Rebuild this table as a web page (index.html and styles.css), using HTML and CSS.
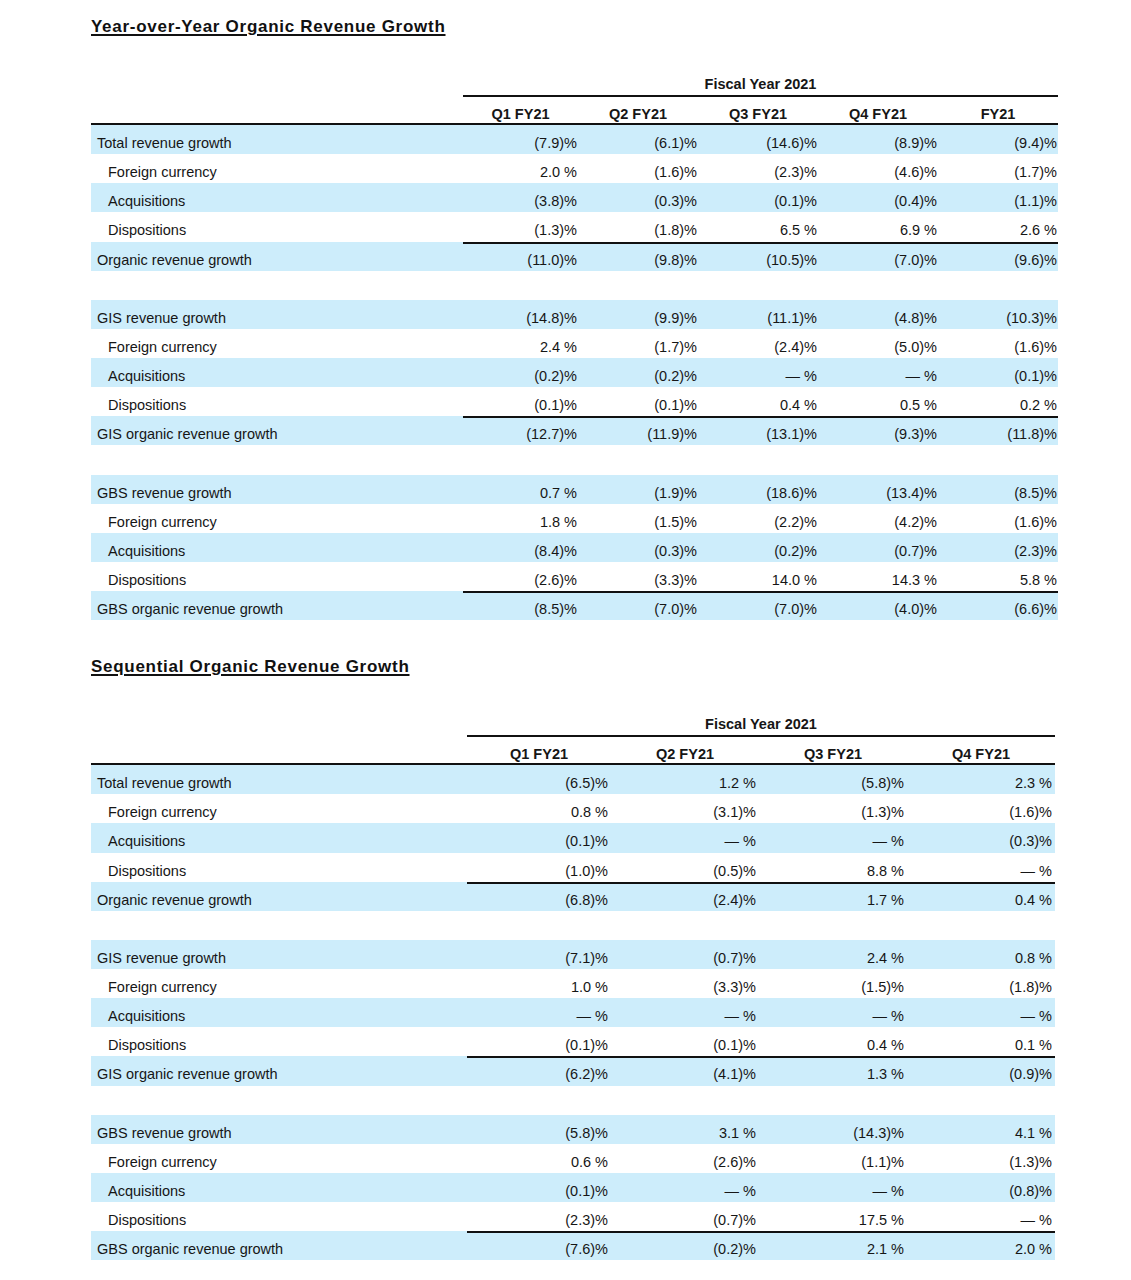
FILE: index.html
```html
<!DOCTYPE html>
<html lang="en">
<head>
<meta charset="utf-8">
<title>Organic Revenue Growth</title>
<link rel="stylesheet" href="styles.css">
</head>
<body>
<main class="page">
  <section class="report">
    <h2 class="title">Year-over-Year Organic Revenue Growth</h2>
    <div class="table t5">
      <div class="row head-top"><div class="cell"></div><div class="cell fiscal">Fiscal Year 2021</div></div>
      <div class="row head"><div class="cell"></div><div class="cell col">Q1 FY21</div><div class="cell col">Q2 FY21</div><div class="cell col">Q3 FY21</div><div class="cell col">Q4 FY21</div><div class="cell col">FY21</div></div>

      <div class="row shade"><div class="cell label">Total revenue growth</div><div class="cell num">(7.9)%</div><div class="cell num">(6.1)%</div><div class="cell num">(14.6)%</div><div class="cell num">(8.9)%</div><div class="cell num">(9.4)%</div></div>
      <div class="row"><div class="cell label sub">Foreign currency</div><div class="cell num">2.0&nbsp;%</div><div class="cell num">(1.6)%</div><div class="cell num">(2.3)%</div><div class="cell num">(4.6)%</div><div class="cell num">(1.7)%</div></div>
      <div class="row shade"><div class="cell label sub">Acquisitions</div><div class="cell num">(3.8)%</div><div class="cell num">(0.3)%</div><div class="cell num">(0.1)%</div><div class="cell num">(0.4)%</div><div class="cell num">(1.1)%</div></div>
      <div class="row"><div class="cell label sub">Dispositions</div><div class="cell num">(1.3)%</div><div class="cell num">(1.8)%</div><div class="cell num">6.5&nbsp;%</div><div class="cell num">6.9&nbsp;%</div><div class="cell num">2.6&nbsp;%</div></div>
      <div class="row shade ruled"><div class="cell label">Organic revenue growth</div><div class="cell num">(11.0)%</div><div class="cell num">(9.8)%</div><div class="cell num">(10.5)%</div><div class="cell num">(7.0)%</div><div class="cell num">(9.6)%</div></div>
      <div class="row blank"></div>

      <div class="row shade"><div class="cell label">GIS revenue growth</div><div class="cell num">(14.8)%</div><div class="cell num">(9.9)%</div><div class="cell num">(11.1)%</div><div class="cell num">(4.8)%</div><div class="cell num">(10.3)%</div></div>
      <div class="row"><div class="cell label sub">Foreign currency</div><div class="cell num">2.4&nbsp;%</div><div class="cell num">(1.7)%</div><div class="cell num">(2.4)%</div><div class="cell num">(5.0)%</div><div class="cell num">(1.6)%</div></div>
      <div class="row shade"><div class="cell label sub">Acquisitions</div><div class="cell num">(0.2)%</div><div class="cell num">(0.2)%</div><div class="cell num">—&nbsp;%</div><div class="cell num">—&nbsp;%</div><div class="cell num">(0.1)%</div></div>
      <div class="row"><div class="cell label sub">Dispositions</div><div class="cell num">(0.1)%</div><div class="cell num">(0.1)%</div><div class="cell num">0.4&nbsp;%</div><div class="cell num">0.5&nbsp;%</div><div class="cell num">0.2&nbsp;%</div></div>
      <div class="row shade ruled"><div class="cell label">GIS organic revenue growth</div><div class="cell num">(12.7)%</div><div class="cell num">(11.9)%</div><div class="cell num">(13.1)%</div><div class="cell num">(9.3)%</div><div class="cell num">(11.8)%</div></div>
      <div class="row blank"></div>

      <div class="row shade"><div class="cell label">GBS revenue growth</div><div class="cell num">0.7&nbsp;%</div><div class="cell num">(1.9)%</div><div class="cell num">(18.6)%</div><div class="cell num">(13.4)%</div><div class="cell num">(8.5)%</div></div>
      <div class="row"><div class="cell label sub">Foreign currency</div><div class="cell num">1.8&nbsp;%</div><div class="cell num">(1.5)%</div><div class="cell num">(2.2)%</div><div class="cell num">(4.2)%</div><div class="cell num">(1.6)%</div></div>
      <div class="row shade"><div class="cell label sub">Acquisitions</div><div class="cell num">(8.4)%</div><div class="cell num">(0.3)%</div><div class="cell num">(0.2)%</div><div class="cell num">(0.7)%</div><div class="cell num">(2.3)%</div></div>
      <div class="row"><div class="cell label sub">Dispositions</div><div class="cell num">(2.6)%</div><div class="cell num">(3.3)%</div><div class="cell num">14.0&nbsp;%</div><div class="cell num">14.3&nbsp;%</div><div class="cell num">5.8&nbsp;%</div></div>
      <div class="row shade ruled"><div class="cell label">GBS organic revenue growth</div><div class="cell num">(8.5)%</div><div class="cell num">(7.0)%</div><div class="cell num">(7.0)%</div><div class="cell num">(4.0)%</div><div class="cell num">(6.6)%</div></div>
    </div>
  </section>

  <section class="report">
    <h2 class="title">Sequential Organic Revenue Growth</h2>
    <div class="table t4">
      <div class="row head-top"><div class="cell"></div><div class="cell fiscal">Fiscal Year 2021</div></div>
      <div class="row head"><div class="cell"></div><div class="cell col">Q1 FY21</div><div class="cell col">Q2 FY21</div><div class="cell col">Q3 FY21</div><div class="cell col">Q4 FY21</div></div>

      <div class="row shade"><div class="cell label">Total revenue growth</div><div class="cell num">(6.5)%</div><div class="cell num">1.2&nbsp;%</div><div class="cell num">(5.8)%</div><div class="cell num">2.3&nbsp;%</div></div>
      <div class="row"><div class="cell label sub">Foreign currency</div><div class="cell num">0.8&nbsp;%</div><div class="cell num">(3.1)%</div><div class="cell num">(1.3)%</div><div class="cell num">(1.6)%</div></div>
      <div class="row shade"><div class="cell label sub">Acquisitions</div><div class="cell num">(0.1)%</div><div class="cell num">—&nbsp;%</div><div class="cell num">—&nbsp;%</div><div class="cell num">(0.3)%</div></div>
      <div class="row"><div class="cell label sub">Dispositions</div><div class="cell num">(1.0)%</div><div class="cell num">(0.5)%</div><div class="cell num">8.8&nbsp;%</div><div class="cell num">—&nbsp;%</div></div>
      <div class="row shade ruled"><div class="cell label">Organic revenue growth</div><div class="cell num">(6.8)%</div><div class="cell num">(2.4)%</div><div class="cell num">1.7&nbsp;%</div><div class="cell num">0.4&nbsp;%</div></div>
      <div class="row blank"></div>

      <div class="row shade"><div class="cell label">GIS revenue growth</div><div class="cell num">(7.1)%</div><div class="cell num">(0.7)%</div><div class="cell num">2.4&nbsp;%</div><div class="cell num">0.8&nbsp;%</div></div>
      <div class="row"><div class="cell label sub">Foreign currency</div><div class="cell num">1.0&nbsp;%</div><div class="cell num">(3.3)%</div><div class="cell num">(1.5)%</div><div class="cell num">(1.8)%</div></div>
      <div class="row shade"><div class="cell label sub">Acquisitions</div><div class="cell num">—&nbsp;%</div><div class="cell num">—&nbsp;%</div><div class="cell num">—&nbsp;%</div><div class="cell num">—&nbsp;%</div></div>
      <div class="row"><div class="cell label sub">Dispositions</div><div class="cell num">(0.1)%</div><div class="cell num">(0.1)%</div><div class="cell num">0.4&nbsp;%</div><div class="cell num">0.1&nbsp;%</div></div>
      <div class="row shade ruled"><div class="cell label">GIS organic revenue growth</div><div class="cell num">(6.2)%</div><div class="cell num">(4.1)%</div><div class="cell num">1.3&nbsp;%</div><div class="cell num">(0.9)%</div></div>
      <div class="row blank"></div>

      <div class="row shade"><div class="cell label">GBS revenue growth</div><div class="cell num">(5.8)%</div><div class="cell num">3.1&nbsp;%</div><div class="cell num">(14.3)%</div><div class="cell num">4.1&nbsp;%</div></div>
      <div class="row"><div class="cell label sub">Foreign currency</div><div class="cell num">0.6&nbsp;%</div><div class="cell num">(2.6)%</div><div class="cell num">(1.1)%</div><div class="cell num">(1.3)%</div></div>
      <div class="row shade"><div class="cell label sub">Acquisitions</div><div class="cell num">(0.1)%</div><div class="cell num">—&nbsp;%</div><div class="cell num">—&nbsp;%</div><div class="cell num">(0.8)%</div></div>
      <div class="row"><div class="cell label sub">Dispositions</div><div class="cell num">(2.3)%</div><div class="cell num">(0.7)%</div><div class="cell num">17.5&nbsp;%</div><div class="cell num">—&nbsp;%</div></div>
      <div class="row shade ruled"><div class="cell label">GBS organic revenue growth</div><div class="cell num">(7.6)%</div><div class="cell num">(0.2)%</div><div class="cell num">2.1&nbsp;%</div><div class="cell num">2.0&nbsp;%</div></div>
    </div>
  </section>
</main>
</body>
</html>
```

FILE: styles.css
```css
* {
  box-sizing: border-box;
}

html, body {
  margin: 0;
  padding: 0;
  background: #ffffff;
}

body {
  font-family: "Liberation Sans", Arial, sans-serif;
  color: #161616;
}

.page {
  padding-left: 91px;
  width: 1131px;
}

.report {
  padding-top: 17px;
}

.report + .report {
  margin-top: 20px;
}

.title {
  margin: 0;
  font-size: 17px;
  line-height: 20px;
  font-weight: 700;
  letter-spacing: 0.72px;
  color: #111;
  text-decoration: underline;
  text-decoration-thickness: 2px;
  text-underline-offset: 2px;
}

.table {
  margin-top: 38px;
  font-size: 14.5px;
}

.row {
  display: grid;
}

.t5 .row {
  grid-template-columns: 372px 115px repeat(4, 120px);
  width: 967px;
}

.t4 .row {
  grid-template-columns: 376px 144px repeat(3, 148px);
  width: 964px;
}

.cell {
  white-space: nowrap;
}

.head-top .fiscal {
  grid-column: 2 / -1;
  text-align: center;
  font-weight: 700;
  line-height: 18px;
  padding-bottom: 2px;
  border-bottom: 2px solid #111;
}

.row.head {
  border-bottom: 2px solid #111;
}

.head .cell {
  padding-top: 8px;
  line-height: 18px;
}

.head .col {
  text-align: center;
  font-weight: 700;
}

.row:not(.head-top):not(.head) {
  height: 29.125px;
}

.row:not(.head-top):not(.head) .cell {
  padding-top: 8px;
  line-height: 21px;
}

.shade {
  background: #cdedfb;
}

.label {
  padding-left: 6px;
}

.label.sub {
  padding-left: 17px;
}

.num {
  text-align: right;
}

.t5 .num {
  padding-right: 1px;
}

.t4 .num {
  padding-right: 3px;
}

.ruled .num {
  box-shadow: inset 0 2px 0 #111;
}
```
